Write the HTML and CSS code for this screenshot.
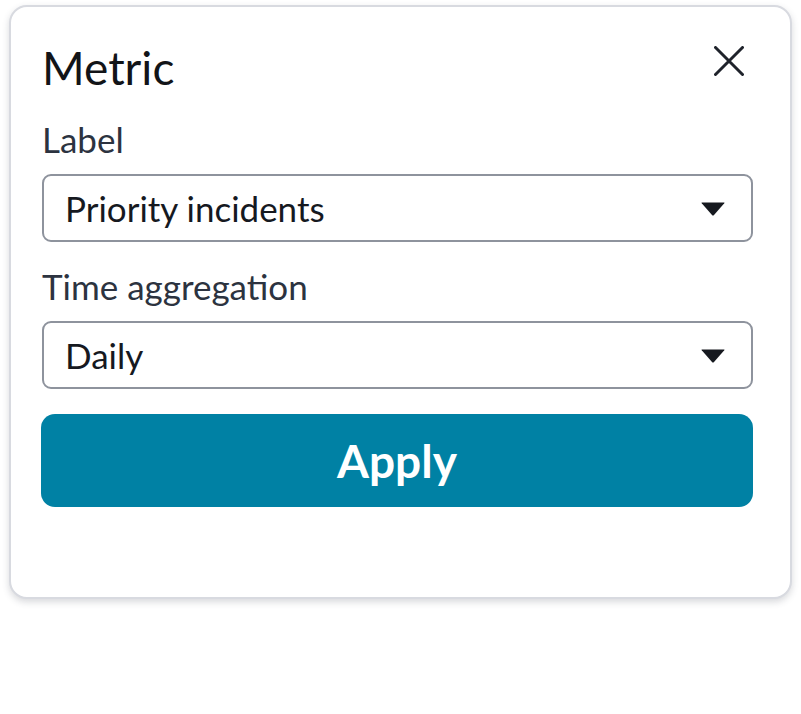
FILE: index.html
```html
<!DOCTYPE html>
<html>
<head>
<meta charset="utf-8">
<link rel="stylesheet" href="styles.css">
</head>
<body>
<div class="card">
  <div class="header">
    <h1 class="title">Metric</h1>
    <button class="close" aria-label="Close">
      <svg width="30" height="30" viewBox="0 0 30 30"><path d="M1.5 1.5 L28.5 28.5 M28.5 1.5 L1.5 28.5" stroke="#1f232b" stroke-width="3" stroke-linecap="round" fill="none"/></svg>
    </button>
  </div>
  <div class="field">
    <label class="label">Label</label>
    <div class="select">
      <span class="value">Priority incidents</span>
      <svg class="caret" width="24" height="14" viewBox="0 0 24 14"><path d="M1 0.5 L23 0.5 Q24 0.5 23.3 1.3 L12.8 13.2 Q12 14 11.2 13.2 L0.7 1.3 Q0 0.5 1 0.5 Z" fill="#16191f"/></svg>
    </div>
  </div>
  <div class="field">
    <label class="label">Time aggregation</label>
    <div class="select">
      <span class="value">Daily</span>
      <svg class="caret" width="24" height="14" viewBox="0 0 24 14"><path d="M1 0.5 L23 0.5 Q24 0.5 23.3 1.3 L12.8 13.2 Q12 14 11.2 13.2 L0.7 1.3 Q0 0.5 1 0.5 Z" fill="#16191f"/></svg>
    </div>
  </div>
  <button class="apply">Apply</button>
</div>
</body>
</html>
```
FILE: styles.css
```css
* { box-sizing: border-box; }
html, body { margin: 0; padding: 0; background: #fff; }
body {
  font-family: Lato, "Noto Sans", sans-serif;
  padding: 5px 9px;
  width: 801px;
  height: 714px;
}
.card {
  width: 783px;
  height: 594px;
  border: 2px solid #d8dae0;
  border-radius: 18px;
  background: #fff;
  box-shadow: 0 3px 7px rgba(60, 64, 80, 0.2);
  padding: 30px 37px 0 31px;
  display: flex;
  flex-direction: column;
}
.header {
  display: flex;
  justify-content: space-between;
  align-items: flex-start;
  height: 84px;
}
.title {
  margin: 8px 0 0 0;
  font-size: 46px;
  font-weight: 400;
  color: #121418;
  line-height: 1;
}
.close {
  border: 0;
  background: none;
  padding: 0;
  margin-top: 9px;
  margin-right: 9px;
  width: 30px;
  height: 30px;
  cursor: pointer;
}
.close svg { display: block; }
.field { display: flex; flex-direction: column; }
.label {
  font-size: 35px;
  color: #2c3340;
  line-height: 36px;
  margin-bottom: 17px;
}
.select {
  width: 711px;
  height: 68px;
  border: 2px solid #8e939d;
  border-radius: 9px;
  display: flex;
  align-items: center;
  justify-content: space-between;
  padding: 0 26px 0 21px;
  margin-bottom: 26px;
}
.field:last-of-type .select { margin-bottom: 25px; }
.value {
  font-size: 35px;
  color: #16191f;
}
.caret { display: block; margin-top: 1px; }
.apply {
  width: 712px;
  height: 93px;
  margin-left: -1px;
  border: 0;
  border-radius: 14px;
  background: #0081a4;
  color: #fff;
  font-family: Lato, "Noto Sans", sans-serif;
  font-weight: 700;
  font-size: 46px;
  padding: 0;
}
```
